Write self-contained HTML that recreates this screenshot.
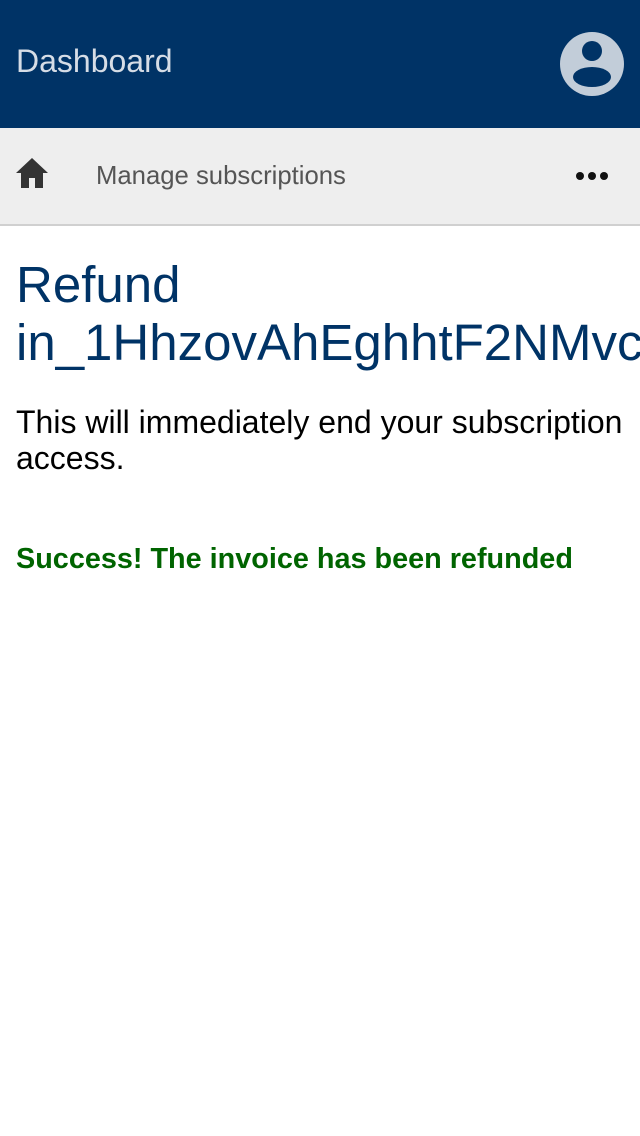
<!DOCTYPE html>
<html><head><style>
body{margin:0;width:640px;height:1136px;background:#fff;font-family:"Liberation Sans",sans-serif;overflow:hidden;position:relative}
.top{position:absolute;left:0;top:0;width:640px;height:128px;background:#003366}
.top .t{position:absolute;left:16px;top:43px;font-size:32px;color:#d6dde6}
.nav{position:absolute;left:0;top:128px;width:640px;height:96px;background:#eeeeee;border-bottom:2px solid #d0d0d0}
.nav .m{position:absolute;left:96px;top:34px;font-size:25.7px;color:#555}
h1{position:absolute;left:16px;top:256px;margin:0;font-weight:normal;font-size:51px;line-height:58px;color:#003366;white-space:nowrap}
.p{position:absolute;left:16px;top:404px;font-size:32px;line-height:36px;color:#000;width:620px}
.s{position:absolute;left:16px;top:543px;font-size:28.8px;font-weight:bold;color:#006400;white-space:nowrap}
</style></head><body>
<div class="top"><div class="t">Dashboard</div>
<svg style="position:absolute;left:560px;top:32px" width="64" height="64" viewBox="0 0 64 64"><circle cx="32" cy="32" r="32" fill="#c2cdd9"/><circle cx="32" cy="19" r="10" fill="#003366"/><ellipse cx="32" cy="45" rx="19" ry="10" fill="#003366"/></svg>
</div>
<div class="nav">
<svg style="position:absolute;left:16px;top:30px" width="32" height="30" viewBox="0 0 32 30"><path d="M16 0 L32 15 L27 15 L27 30 L19 30 L19 20 L13 20 L13 30 L5 30 L5 15 L0 15 Z" fill="#333"/></svg>
<div class="m">Manage subscriptions</div>
<svg style="position:absolute;left:574px;top:42px" width="36" height="12"><circle cx="6" cy="6" r="4" fill="#111"/><circle cx="18" cy="6" r="4" fill="#111"/><circle cx="30" cy="6" r="4" fill="#111"/></svg>
</div>
<h1>Refund<br>in_1HhzovAhEghhtF2NMvc</h1>
<div class="p">This will immediately end your subscription access.</div>
<div class="s">Success! The invoice has been refunded</div>
</body></html>
